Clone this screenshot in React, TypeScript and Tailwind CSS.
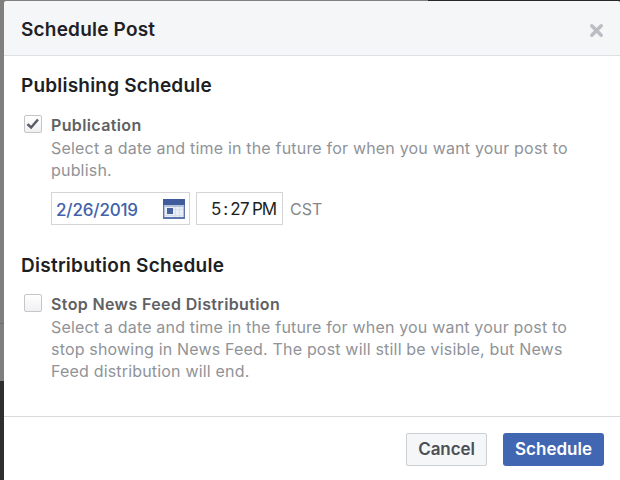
import { useState } from "react";
import type { ReactNode } from "react";

interface ScheduleOptionProps {
  label: string;
  checked: boolean;
  onToggle: () => void;
  children: ReactNode;
}

function CalendarIcon() {
  return (
    <svg width="22" height="20" viewBox="0 0 22 20" shapeRendering="crispEdges">
      <rect width="22" height="20" fill="#5d75ab" />
      <rect width="22" height="6" fill="#3f5b9b" />
      <rect x="1" y="6" width="20" height="12" fill="#b3c1df" />
      <rect x="2" y="8" width="18" height="10" fill="#e9edf6" />
      <path
        d="M10 10.5h10M2 16.5h18M12.5 8v10M16.5 8v10"
        stroke="#d7deed"
        fill="none"
      />
      <rect x="4" y="9" width="6" height="6" fill="#4a639f" />
    </svg>
  );
}

function Checkbox({
  checked,
  label,
  onToggle,
}: {
  checked: boolean;
  label: string;
  onToggle: () => void;
}) {
  return (
    <button
      role="checkbox"
      aria-checked={checked}
      aria-label={label}
      onClick={onToggle}
      className="flex h-[18px] w-[18px] shrink-0 items-center justify-center rounded-[2px] border border-[#c6c6c9] bg-linear-to-b from-white to-[#f0f0f2]"
    >
      {checked && (
        <svg width="14" height="12" viewBox="0 0 14 12" fill="none">
          <path d="M1.5 6.2l3.6 3.3L12 1.5" stroke="#5a5d68" strokeWidth="2.5" />
        </svg>
      )}
    </button>
  );
}

function ScheduleOption({
  label,
  checked,
  onToggle,
  children,
}: ScheduleOptionProps) {
  return (
    <div className="flex gap-[9px] pl-[3px]">
      <Checkbox checked={checked} label={label} onToggle={onToggle} />

      <div className="min-w-0 flex-1">
        <div className="mb-[2px] text-[16px] leading-[20px] font-semibold tracking-[0.37px] whitespace-nowrap text-[#606163]">
          {label}
        </div>
        {children}
      </div>
    </div>
  );
}

export default function App() {
  const [publish, setPublish] = useState(true);
  const [stop, setStop] = useState(false);

  return (
    <div className="flex h-[480px] w-[620px] flex-col overflow-hidden bg-[#817f7e] font-[Inter,sans-serif]">
      {/* Page behind the dialog */}
      <div className="flex h-px shrink-0">
        <div className="w-[428px]" />
        <div className="flex-1 bg-[#292629]" />
      </div>

      <div className="flex min-h-0 flex-1">
        <div className="flex w-1 shrink-0 flex-col">
          <div className="h-[323px] border-b border-[#6d6c6b]" />
          <div className="h-[57px]" />
          <div className="flex-1 bg-[#302e2c]" />
        </div>

        {/* Dialog */}
        <div className="flex min-w-0 flex-1 flex-col rounded-t-[3px] bg-white">
          <div className="flex h-[55px] shrink-0 items-center justify-between rounded-t-[3px] border-b border-[#dfe0e4] bg-[#f5f6f8] pr-[17px] pl-[17px]">
            <h1 className="pt-[4px] text-[19px] font-semibold tracking-[0.2px] text-[#1f2126]">
              Schedule Post
            </h1>

            <button aria-label="Close" className="mt-[4px] -mr-[1px]">
              <svg width="15" height="15" viewBox="0 0 15 15">
                <path
                  d="M2.8 2.8l9.4 9.4M12.2 2.8l-9.4 9.4"
                  stroke="#bbbdc2"
                  strokeWidth="3.5"
                  strokeLinecap="round"
                />
              </svg>
            </button>
          </div>

          <div className="flex-1 pt-[18px] pl-[17px]">
            <h2 className="mb-[17px] text-[19px] leading-[24px] font-semibold tracking-[0.2px] whitespace-nowrap text-[#1d1f24]">
              Publishing Schedule
            </h2>

            <ScheduleOption
              label="Publication"
              checked={publish}
              onToggle={() => setPublish(!publish)}
            >
              <p className="text-[16px] leading-[22px] tracking-[0.19px] whitespace-nowrap text-[#909398]">
                Select a date and time in the future for when you want your post to
                <br />
                publish.
              </p>

              <div className="mt-[11px] flex items-center">
                <div className="flex h-[33px] w-[139px] items-center justify-between border border-[#d4d5d7] pr-[4px] pl-[4px]">
                  <span className="pt-[4px] text-[17px] font-medium tracking-[-0.17px] text-[#4262aa]">
                    2/26/2019
                  </span>
                  <CalendarIcon />
                </div>

                <div className="ml-[6px] flex h-[33px] w-[87px] items-center border border-[#d4d5d7] pt-[2px] pl-[14px] text-[17px] text-[#1d1f23]">
                  <span>5</span>
                  <span className="px-[2px]">:</span>
                  <span className="tracking-[-0.6px]">27</span>
                  <span className="ml-[3px] tracking-[-1.2px]">PM</span>
                </div>

                <span className="ml-[7px] text-[16px] text-[#85878a]">CST</span>
              </div>
            </ScheduleOption>

            <h2 className="mt-[29px] mb-[16px] text-[19px] leading-[24px] font-semibold tracking-[0.26px] whitespace-nowrap text-[#1d1f24]">
              Distribution Schedule
            </h2>

            <ScheduleOption
              label="Stop News Feed Distribution"
              checked={stop}
              onToggle={() => setStop(!stop)}
            >
              <p className="text-[16px] leading-[22px] tracking-[0.18px] whitespace-nowrap text-[#909398]">
                Select a date and time in the future for when you want your post to
                <br />
                stop showing in News Feed. The post will still be visible, but News
                <br />
                Feed distribution will end.
              </p>
            </ScheduleOption>
          </div>

          <div className="flex h-[64px] shrink-0 items-center justify-end gap-4 border-t border-[#d9dadd] pr-4 pt-px">
            <button className="h-[33px] w-[81px] rounded-[2px] border border-[#cccfd4] bg-[#f5f6f8] pt-[2px] text-[17px] font-semibold tracking-[-0.1px] text-[#4b4f56]">
              Cancel
            </button>

            <button className="h-[33px] w-[101px] rounded-[3px] bg-[#4267b2] pt-[2px] text-[17px] font-semibold text-white">
              Schedule
            </button>
          </div>
        </div>
      </div>
    </div>
  );
}
